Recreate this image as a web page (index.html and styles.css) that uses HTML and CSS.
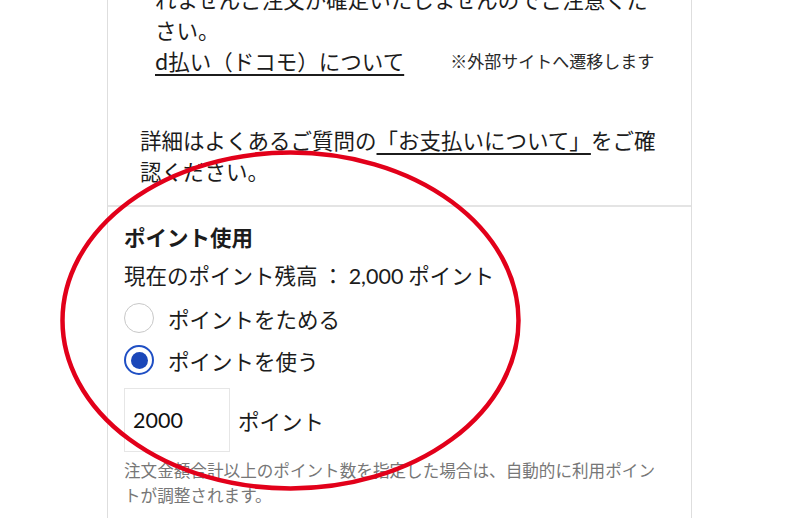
FILE: index.html
```html
<!DOCTYPE html>
<html lang="ja">
<head>
<meta charset="utf-8">
<link rel="stylesheet" href="styles.css">
</head>
<body>
<div class="page">
  <div class="card">
    <section class="pay">
      <div class="pay-desc">
        <p class="pay-text">れませんご注文が確定いたしませんのでご注意ください。</p>
        <div class="pay-link-row">
          <a class="link" href="#">d払い（ドコモ）について</a>
          <span class="ext">※外部サイトへ遷移します</span>
        </div>
      </div>
      <p class="faq">詳細はよくあるご質問の<a class="link" href="#">「お支払いについて」</a>をご確認ください。</p>
    </section>
    <section class="points">
      <h2 class="points-title">ポイント使用</h2>
      <p class="balance">現在のポイント残高 ： <span class="num">2,000</span> ポイント</p>
      <div class="radio-row"><span class="radio"></span><span class="radio-label">ポイントをためる</span></div>
      <div class="radio-row"><span class="radio checked"></span><span class="radio-label">ポイントを使う</span></div>
      <div class="input-row">
        <div class="point-input"><span class="num">2000</span></div>
        <span class="unit">ポイント</span>
      </div>
      <p class="note">注文金額合計以上のポイント数を指定した場合は、自動的に利用ポイントが調整されます。</p>
    </section>
  </div>
  <svg class="annotation" width="800" height="518" viewBox="0 0 800 518">
    <ellipse cx="290.5" cy="320.5" rx="228" ry="168" fill="none" stroke="#e2001a" stroke-width="4.5"/>
  </svg>
</div>
</body>
</html>
```
FILE: styles.css
```css
html, body {
  margin: 0;
  padding: 0;
  background: #fff;
}
body {
  font-family: "Noto Sans CJK JP", "Noto Sans", sans-serif;
  color: #1c1c1c;
  font-size: 21.5px;
  line-height: 31px;
  overflow: hidden;
  width: 800px;
  height: 518px;
}
.page {
  position: relative;
  width: 800px;
  height: 518px;
  overflow: hidden;
}
.card {
  margin: -17.5px 0 0 107px;
  width: 583px;
  border-left: 1px solid #dedede;
  border-right: 1px solid #dedede;
}
p, h2 {
  margin: 0;
}
.num {
  font-family: "Lato", "Noto Sans CJK JP", sans-serif;
}
.pay {
  padding: 0 33px 19.5px 32px;
  border-bottom: 2px solid #e4e4e4;
}
.pay-desc {
  padding-left: 15px;
}
.pay-link-row {
  display: flex;
  align-items: center;
  gap: 46px;
}
.link {
  color: #1c1c1c;
  text-decoration: underline;
  text-underline-offset: 4px;
  text-decoration-thickness: 1.5px;
}
.ext {
  font-size: 17px;
  color: #2a2a2a;
}
.faq {
  margin-top: 48px;
}
.points {
  padding: 14px 17px 20px 16px;
}
.points-title {
  font-size: 21.5px;
  font-weight: bold;
  line-height: 31px;
}
.balance {
  margin-top: 7px;
}
.radio-row {
  display: flex;
  align-items: center;
  height: 42px;
  gap: 14px;
}
.radio-row:first-of-type {
  margin-top: 5px;
}
.radio {
  box-sizing: border-box;
  width: 30px;
  height: 30px;
  border-radius: 50%;
  border: 1.5px solid #c8c8c8;
  display: flex;
  align-items: center;
  justify-content: center;
  flex: none;
}
.radio.checked {
  border: 2px solid #1f4fc4;
}
.radio.checked::after {
  content: "";
  width: 17px;
  height: 17px;
  border-radius: 50%;
  background: #1b47b9;
}
.input-row {
  display: flex;
  align-items: center;
  gap: 8px;
  margin-top: 7px;
}
.point-input {
  box-sizing: border-box;
  width: 106px;
  height: 64px;
  border: 1px solid #e6e6e6;
  padding-left: 8px;
  display: flex;
  align-items: center;
  font-size: 21.5px;
  color: #111;
}
.note {
  margin-top: 5.5px;
  margin-right: 6px;
  font-size: 16.6px;
  line-height: 25px;
  color: #777;
}
.annotation {
  position: absolute;
  left: 0;
  top: 0;
  pointer-events: none;
}
```
